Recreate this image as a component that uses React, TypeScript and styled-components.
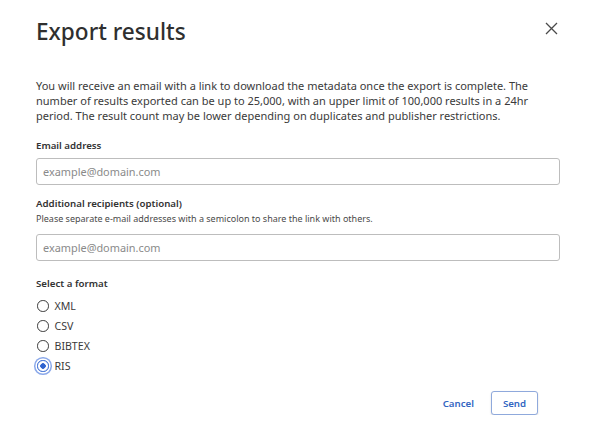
import React, { useState } from "react";
import styled, { createGlobalStyle } from "styled-components";

const GlobalStyle = createGlobalStyle`
  html, body {
    margin: 0;
    background: #ffffff;
  }
  body {
    font-family: "Noto Sans", "Open Sans", sans-serif;
    color: #333333;
  }
`;

const FORMATS = ["XML", "CSV", "BIBTEX", "RIS"];

export default function App() {
  const [format, setFormat] = useState("RIS");

  return (
    <>
      <GlobalStyle />
      <Dialog>
        <Header>
          <Title>Export results</Title>
          <CloseButton aria-label="Close">
            <svg width="13" height="13" viewBox="0 0 13 13">
              <path d="M1 1 L12 12 M12 1 L1 12" stroke="#4a4a4a" strokeWidth="1.3" fill="none" />
            </svg>
          </CloseButton>
        </Header>

        <Intro>
          You will receive an email with a link to download the metadata once the export is complete. The
          number of results exported can be up to 25,000, with an upper limit of 100,000 results in a 24hr
          period. The result count may be lower depending on duplicates and publisher restrictions.
        </Intro>

        <Field $gap={15}>
          <Label>Email address</Label>
          <Input placeholder="example@domain.com" />
        </Field>

        <Field $gap={11}>
          <Label>Additional recipients (optional)</Label>
          <Hint>Please separate e-mail addresses with a semicolon to share the link with others.</Hint>
          <Input placeholder="example@domain.com" />
        </Field>

        <FormatGroup>
          <Label>Select a format</Label>
          <RadioList>
            {FORMATS.map((f) => (
              <RadioRow key={f}>
                <RadioInput
                  type="radio"
                  name="format"
                  checked={format === f}
                  onChange={() => setFormat(f)}
                />
                <span>{f}</span>
              </RadioRow>
            ))}
          </RadioList>
        </FormatGroup>

        <Footer>
          <TextButton>Cancel</TextButton>
          <OutlineButton>Send</OutlineButton>
        </Footer>
      </Dialog>
    </>
  );
}

const Dialog = styled.div`
  display: flex;
  flex-direction: column;
  padding: 16px 42px 0 36px;
`;

const Header = styled.div`
  display: flex;
  justify-content: space-between;
  align-items: flex-start;
  margin-right: -3px;
`;

const Title = styled.h1`
  margin: 0;
  font-size: 22.6px;
  line-height: 32px;
  font-weight: 500;
  color: #2f2f2f;
`;

const CloseButton = styled.button`
  display: flex;
  align-items: center;
  justify-content: center;
  width: 24px;
  height: 24px;
  padding: 0;
  border: none;
  background: none;
  cursor: pointer;
`;

const Intro = styled.p`
  margin: 30px 0 0;
  font-size: 11px;
  line-height: 15px;
  color: #3a3a3a;
`;

const Field = styled.div<{ $gap?: number }>`
  display: flex;
  flex-direction: column;
  margin-top: ${(p) => p.$gap ?? 15}px;
`;

const Label = styled.label`
  font-size: 9.7px;
  line-height: 15px;
  font-weight: 600;
  color: #333333;
`;

const Hint = styled.span`
  margin-bottom: 3px;
  font-size: 9px;
  line-height: 15px;
  color: #4a4a4a;
`;

const Input = styled.input`
  box-sizing: border-box;
  margin-top: 5px;
  width: 100%;
  height: 27px;
  padding: 0 6px;
  border: 1px solid #bdbdbd;
  border-radius: 3px;
  font-family: inherit;
  font-size: 10.9px;
  color: #333333;
  outline: none;

  &::placeholder {
    color: #8a8a8a;
  }
`;

const FormatGroup = styled.div`
  display: flex;
  flex-direction: column;
  margin-top: 15px;
`;

const RadioList = styled.div`
  display: flex;
  flex-direction: column;
  margin-top: 5px;
`;

const RadioRow = styled.label`
  display: flex;
  align-items: center;
  gap: 6px;
  height: 20px;
  font-size: 10.6px;
  color: #3a3a3a;
`;

const RadioInput = styled.input`
  appearance: none;
  box-sizing: border-box;
  margin: 0 0 0 1px;
  width: 11.5px;
  height: 11.5px;
  border: 1.7px solid #3a3a3a;
  border-radius: 50%;
  background: #ffffff;

  &:checked {
    border-color: #2f63cf;
    background: radial-gradient(circle, #2f63cf 0 2.5px, #ffffff 3px);
    box-shadow: 0 0 0 1.5px #ffffff, 0 0 0 3px #8aa8ea;
  }
`;

const Footer = styled.div`
  display: flex;
  justify-content: flex-end;
  align-items: center;
  gap: 17px;
  margin-top: 15px;
  margin-right: 22px;
`;

const TextButton = styled.button`
  padding: 0;
  border: none;
  background: none;
  font-family: inherit;
  font-size: 9.7px;
  font-weight: 600;
  color: #3366c2;
  cursor: pointer;
`;

const OutlineButton = styled.button`
  box-sizing: border-box;
  width: 47px;
  height: 24px;
  border: 1px solid #8fa9dc;
  border-radius: 3px;
  background: #ffffff;
  box-shadow: 0 1px 2px rgba(0, 0, 0, 0.15);
  font-family: inherit;
  font-size: 9.7px;
  font-weight: 600;
  color: #3366c2;
  cursor: pointer;
`;
